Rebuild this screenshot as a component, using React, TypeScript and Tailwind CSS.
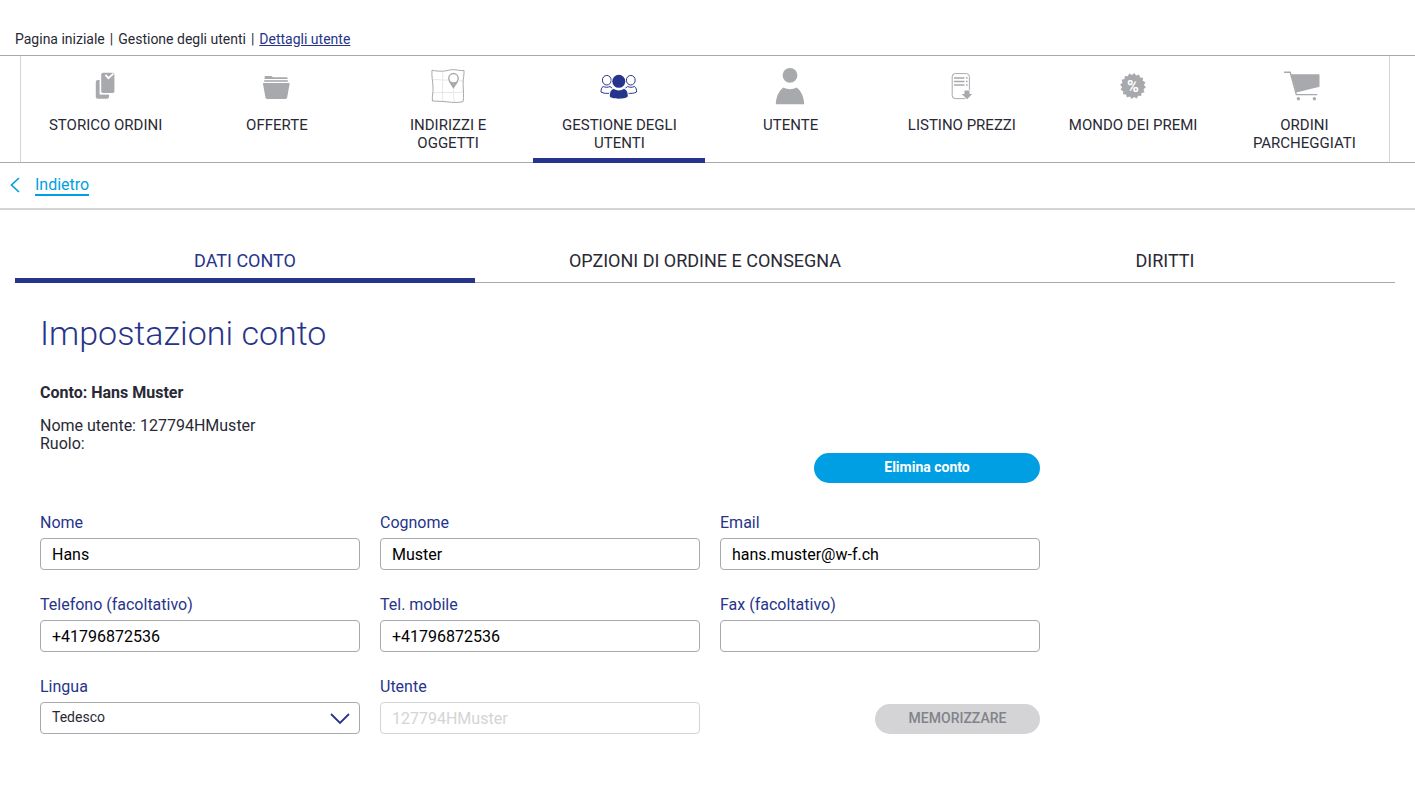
import { useState } from 'react';
import type { ReactNode } from 'react';
import clsx from 'clsx';

type NavItem = { label: string; icon: ReactNode };

const GREY = '#a8a9ad';

function Icon({ children }: { children: ReactNode }) {
  return (
    <svg width="48" height="48" viewBox="0 0 48 48" fill="none" aria-hidden="true">
      {children}
    </svg>
  );
}

const OrdersIcon = () => (
  <Icon>
    <rect x="13.8" y="18" width="13.2" height="18.8" rx="2" fill={GREY} />
    <rect x="17.6" y="9" width="17" height="23.6" fill="#fff" />
    <rect x="19.2" y="10.8" width="13.2" height="20.2" rx="1.8" fill={GREY} />
    <path d="M23.400 12.800l3 3.400 5-4.600" stroke="#fff" strokeWidth="1.8" />
  </Icon>
);

const OffersIcon = () => (
  <Icon>
    <path d="M11.6 15.2c0-.8.5-1.2 1.2-1.2h5.6l1.6 1.2h13.4c.8 0 1.2.5 1.2 1.2v.6h-23z" fill={GREY} />
    <path d="M11.200 19h23.600" stroke={GREY} strokeWidth="1.6" />
    <path d="M10.800 21h25c.6 0 1 .5.8 1.100l-2.400 13.200c-.2 1.100-.8 1.700-1.800 1.700H14.200c-1 0-1.600-.6-1.800-1.700L10 22.100c-.1-.6.2-1.100.8-1.100z" fill={GREY} />
  </Icon>
);

const MapIcon = () => (
  <Icon>
    <path d="M18.500 9.500c1 8-1 18 .5 30M29.500 28c0 5-.5 7 1.500 13M8 18c7-1.500 11 1 16 0M8.500 31c9-1.500 19 .5 31-1M35 19l5-.5" stroke="#e4e4e6" strokeWidth="0.900" />
    <path d="M8 8.200c3 .8 7 1 10.500 1s8-2 12-1.500 7 1.200 9.500.8c.5 3-1.200 9-.9 14 .2 6 .9 12 0 17-4 1.200-8 1.200-11.500.8-6-.7-13-1.300-19.200-1.300-.4-5 1-9 .6-14-.3-6-1.500-11-1-16.800z" stroke={GREY} strokeWidth="1" />
    <path fillRule="evenodd" d="M29.500 10.800a5.400 5.400 0 0 0-5.400 5.400c0 4 3.700 7 5.400 11 1.700-4 5.400-7 5.400-11a5.400 5.400 0 0 0-5.400-5.400zm0 1.500a4 4 0 1 1 0 8 4 4 0 0 1 0-8z" fill={GREY} />
  </Icon>
);

const UsersIcon = () => (
  <Icon>
    <g stroke="#27348b" strokeWidth="1" fill="#fff">
      <ellipse cx="11.800" cy="18.200" rx="4.400" ry="4.800" />
      <ellipse cx="35.800" cy="18.200" rx="4.400" ry="4.800" />
      <path d="M8.200 24.500c-2 1-2.200 3.500-2.200 5.500 2.500 1.500 6 1.600 9.500 1.200l2-4.700-2.500-2c-2 1-4.700 1-6.800 0z" />
      <path d="M39.400 24.500c2 1 2.200 3.500 2.200 5.500-2.500 1.500-6 1.600-9.500 1.200l-2-4.700 2.500-2c2 1 4.700 1 6.800 0z" />
    </g>
    <circle cx="23.800" cy="19.500" r="7.300" fill="#fff" />
    <path d="M18 25.800c-3 1.400-4 4-4.200 8.200 2 5 18 5 20 0-.2-4.200-1.200-6.800-4.200-8.200z" fill="#fff" />
    <circle cx="23.800" cy="19.300" r="6.500" fill="#27348b" />
    <path d="M18.600 26.800c-3 1.200-3.800 4-3.800 7.200 0 3.500 18 3.500 18 0 0-3.200-.8-6-3.800-7.200-3 2.200-7.400 2.200-10.400 0z" fill="#27348b" />
  </Icon>
);

const UserIcon = () => (
  <Icon>
    <circle cx="23" cy="13.300" r="7.400" fill={GREY} />
    <path d="M16.500 25.500c4 2.300 9 2.300 13 0 4.500 3 7.500 9.500 7.700 16.700H8.800C9 35 12 28.500 16.500 25.500z" fill={GREY} />
  </Icon>
);

const PriceListIcon = () => (
  <Icon>
    <rect x="14.200" y="11.600" width="17.200" height="25" rx="3" stroke={GREY} strokeWidth="1" />
    <path d="M16 16h10.500M16 19.500h10.500M16 23h10.500" stroke={GREY} strokeWidth="1.700" />
    <path d="M28 16h1.600M28 19.500h1.600M28 23h1.600" stroke={GREY} strokeWidth="1.700" />
    <path d="M26.500 28.500h5V32h2.800L29 37.300 23.700 32h2.800z" fill={GREY} stroke="#fff" strokeWidth="1.600" paintOrder="stroke" />
  </Icon>
);

// 16-pointed rosette
const badgePoints = Array.from({ length: 32 }, (_, i) => {
  const radius = i % 2 === 0 ? 13 : 11;
  const angle = (Math.PI * (i + 0.5)) / 16;
  return `${(24 + radius * Math.cos(angle)).toFixed(2)},${(24 + radius * Math.sin(angle)).toFixed(2)}`;
}).join(' ');

const RewardsIcon = () => (
  <Icon>
    <polygon points={badgePoints} fill={GREY} />
    <text x="24" y="29.500" textAnchor="middle" fontSize="16" fontWeight="700" fill="#fff">
      %
    </text>
  </Icon>
);

const CartIcon = () => (
  <Icon>
    <path d="M11 12.200h27.500c.6 0 1 .4 1 1v11.600L16.300 30.500z" fill={GREY} />
    <path d="M4 10.300h6.200L16.300 32.600h21" stroke={GREY} strokeWidth="1.400" />
    <circle cx="18.400" cy="36.700" r="1.700" fill={GREY} />
    <circle cx="34.400" cy="36.700" r="1.700" fill={GREY} />
  </Icon>
);

const navItems: NavItem[] = [
  { label: 'Storico ordini', icon: <OrdersIcon /> },
  { label: 'Offerte', icon: <OffersIcon /> },
  { label: 'Indirizzi e oggetti', icon: <MapIcon /> },
  { label: 'Gestione degli utenti', icon: <UsersIcon /> },
  { label: 'Utente', icon: <UserIcon /> },
  { label: 'Listino prezzi', icon: <PriceListIcon /> },
  { label: 'Mondo dei premi', icon: <RewardsIcon /> },
  { label: 'Ordini parcheggiati', icon: <CartIcon /> },
];

const tabs = ['Dati conto', 'Opzioni di ordine e consegna', 'Diritti'];

function Breadcrumb() {
  return (
    <nav aria-label="Breadcrumb" className="flex gap-[5px] px-[15px] pt-[30px] pb-[7px] text-sm leading-[18px]">
      <a href="#">Pagina iniziale</a>
      <span>|</span>
      <a href="#">Gestione degli utenti</a>
      <span>|</span>
      <a href="#" className="text-[#27348b] underline">Dettagli utente</a>
    </nav>
  );
}

function MainNav() {
  const active = 'Gestione degli utenti';

  return (
    <nav className="border-y border-[#a8a9ad]">
      <ul className="ml-5 mr-[25px] grid grid-cols-8 shadow-[inset_1px_0_#d4d4d6,inset_-1px_0_#d4d4d6]">
        {navItems.map(({ label, icon }) => (
          <li key={label} className="relative">
            <a href="#" className="flex h-[106px] flex-col items-center px-5 pt-[6px] text-center text-[15px] leading-[18px] uppercase">
              {icon}
              <span className="mt-[6px]">{label}</span>
            </a>
            {label === active && <span className="absolute -left-px right-0 -bottom-px h-[5px] bg-[#27348b]" />}
          </li>
        ))}
      </ul>
    </nav>
  );
}

function Tabs() {
  const [current, setCurrent] = useState(tabs[0]);

  return (
    <div role="tablist" className="ml-[15px] mr-5 mt-[29px] grid grid-cols-3">
      {tabs.map((tab) => (
        <button
          key={tab}
          type="button"
          role="tab"
          aria-selected={tab === current}
          onClick={() => setCurrent(tab)}
          className={clsx(
            'h-11 text-lg leading-[22px] uppercase',
            tab === current
              ? 'border-b-[5px] border-[#27348b] pt-[5px] text-[#27348b]'
              : 'border-b border-[#a8a9ad] pt-px',
          )}
        >
          {tab}
        </button>
      ))}
    </div>
  );
}

type FieldProps = { id: string; label: string; value?: string; type?: string; disabled?: boolean };

function Field({ id, label, value = '', type = 'text', disabled }: FieldProps) {
  return (
    <div>
      <label htmlFor={id} className="block pb-[6px] leading-[18px] text-[#27348b]">{label}</label>
      <input
        id={id}
        type={type}
        defaultValue={value}
        disabled={disabled}
        className="h-8 w-full rounded border border-[#a8a9ad] bg-white px-[11px] text-black disabled:border-[#d4d4d6] disabled:text-[#d4d4d6]"
      />
    </div>
  );
}

export default function App() {
  return (
    <div className="min-h-screen bg-white font-['Roboto','Liberation_Sans',sans-serif] text-base font-normal text-[#292935]">
      <Breadcrumb />
      <MainNav />

      <div className="flex items-start gap-[15px] border-b-2 border-[#d4d4d6] px-[10px] pt-3 pb-3 text-[#009fe3]">
        <svg width="10" height="16" viewBox="0 0 10 16" fill="none" className="mt-[2px]" aria-hidden="true">
          <path d="M9 1L1.500 8L9 15" stroke="currentColor" strokeWidth="1.700" />
        </svg>
        <a href="#" className="border-b-2 border-[#009fe3] leading-[19px]">Indietro</a>
      </div>

      <Tabs />

      <main className="px-10 pb-14">
        <h1 className="mt-7 text-[34px] leading-[44px] font-light text-[#27348b]">Impostazioni conto</h1>
        <p className="mt-[29px] leading-[18px] font-bold">Conto: Hans Muster</p>
        <p className="mt-[15px] leading-[18px]">
          Nome utente: 127794HMuster
          <br />
          Ruolo:
        </p>

        <form className="max-w-[1000px]" onSubmit={(e) => e.preventDefault()}>
          <div className="flex justify-end">
            <button type="button" className="h-[30px] w-[226px] rounded-full bg-[#009fe3] pb-[2px] text-sm font-bold text-white">
              Elimina conto
            </button>
          </div>

          <div className="mt-[31px] grid grid-cols-3 gap-x-5 gap-y-[26px]">
            <Field id="nome" label="Nome" value="Hans" />
            <Field id="cognome" label="Cognome" value="Muster" />
            <Field id="email" label="Email" type="email" value="hans.muster@w-f.ch" />
            <Field id="telefono" label="Telefono (facoltativo)" type="tel" value="+41796872536" />
            <Field id="mobile" label="Tel. mobile" type="tel" value="+41796872536" />
            <Field id="fax" label="Fax (facoltativo)" type="tel" />

            <div>
              <label htmlFor="lingua" className="block pb-[6px] leading-[18px] text-[#27348b]">Lingua</label>
              <div className="relative">
                <select
                  id="lingua"
                  defaultValue="Tedesco"
                  className="block h-8 w-full appearance-none rounded border border-[#a8a9ad] bg-white px-[11px] pb-[2px] text-sm"
                >
                  <option>Tedesco</option>
                  <option>Francese</option>
                  <option>Italiano</option>
                </select>
                <svg width="20" height="12" viewBox="0 0 20 12" fill="none" className="pointer-events-none absolute right-[10px] top-[11px]" aria-hidden="true">
                  <path d="M1 1L10 10L19 1" stroke="#27348b" strokeWidth="1.800" />
                </svg>
              </div>
            </div>
            <Field id="utente" label="Utente" value="127794HMuster" disabled />
            <div className="flex items-end justify-end">
              <button type="submit" disabled className="h-[30px] w-[165px] rounded-full bg-[#d4d4d6] pb-[2px] text-sm font-medium text-[#82838a] uppercase">
                Memorizzare
              </button>
            </div>
          </div>
        </form>
      </main>
    </div>
  );
}
